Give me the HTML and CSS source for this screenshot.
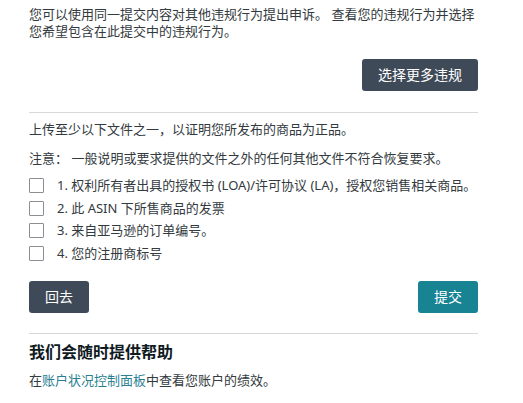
FILE: index.html
```html
<!DOCTYPE html>
<html lang="zh-CN">
<head>
<meta charset="utf-8">
<title>申诉</title>
<link rel="stylesheet" href="styles.css">
</head>
<body>
<div class="page">
  <p class="intro">您可以使用同一提交内容对其他违规行为提出申诉。 查看您的违规行为并选择您希望包含在此提交中的违规行为。</p>
  <div class="row-end">
    <button class="btn btn-dark btn-wide">选择更多违规</button>
  </div>
  <hr class="divider first">
  <p class="upload">上传至少以下文件之一，以证明您所发布的商品为正品。</p>
  <p class="note">注意： 一般说明或要求提供的文件之外的任何其他文件不符合恢复要求。</p>
  <ul class="checks">
    <li><span class="box"></span><span>1. 权利所有者出具的授权书 (LOA)/许可协议 (LA)，授权您销售相关商品。</span></li>
    <li><span class="box"></span><span>2. 此 ASIN 下所售商品的发票</span></li>
    <li><span class="box"></span><span>3. 来自亚马逊的订单编号。</span></li>
    <li><span class="box"></span><span>4. 您的注册商标号</span></li>
  </ul>
  <div class="actions">
    <button class="btn btn-dark">回去</button>
    <button class="btn btn-teal">提交</button>
  </div>
  <hr class="divider second">
  <h2 class="help-title">我们会随时提供帮助</h2>
  <p class="help-text">在<a href="#" class="link">账户状况控制面板</a>中查看您账户的绩效。</p>
</div>
</body>
</html>
```

FILE: styles.css
```css
html, body {
  margin: 0;
  padding: 0;
  background: #ffffff;
}

body {
  font-family: "Noto Sans", "Noto Sans CJK SC", sans-serif;
  font-size: 13px;
  line-height: 17px;
  color: #333a40;
}

.page {
  width: 449px;
  padding: 6px 0 0 29px;
}

p {
  margin: 0;
}

.intro {
  margin: 0;
}

.row-end {
  display: flex;
  justify-content: flex-end;
  margin-top: 19px;
}

.btn {
  font-family: "Noto Sans", "Noto Sans CJK SC", sans-serif;
  font-size: 14px;
  line-height: 20px;
  height: 32px;
  border: none;
  border-radius: 3px;
  color: #ffffff;
  padding: 0;
  width: 60px;
  cursor: pointer;
}

.btn-wide {
  width: 116px;
}

.btn-dark {
  background: #3f4a59;
}

.btn-teal {
  background: #178393;
}

.divider {
  border: none;
  border-top: 1px solid #d8d8d8;
  margin: 0;
}

.divider.first {
  margin-top: 21px;
}

.upload {
  margin-top: 8px;
}

.note {
  margin-top: 12px;
}

.checks {
  list-style: none;
  margin: 7px 0 0 0;
  padding: 0;
}

.checks li {
  display: flex;
  align-items: center;
  gap: 13px;
  height: 22.7px;
}

.box {
  display: block;
  flex: none;
  width: 13px;
  height: 13px;
  border: 1px solid #8a8f94;
  border-radius: 1px;
  background: #fff;
}

.actions {
  display: flex;
  justify-content: space-between;
  margin-top: 16px;
}

.divider.second {
  margin-top: 20px;
}

.help-title {
  margin: 8px 0 0 0;
  font-size: 16px;
  line-height: 20px;
  font-weight: 700;
  color: #0f1a1f;
}

.help-text {
  margin-top: 10px;
}

.link {
  color: #2a7f92;
  text-decoration: none;
}
```
